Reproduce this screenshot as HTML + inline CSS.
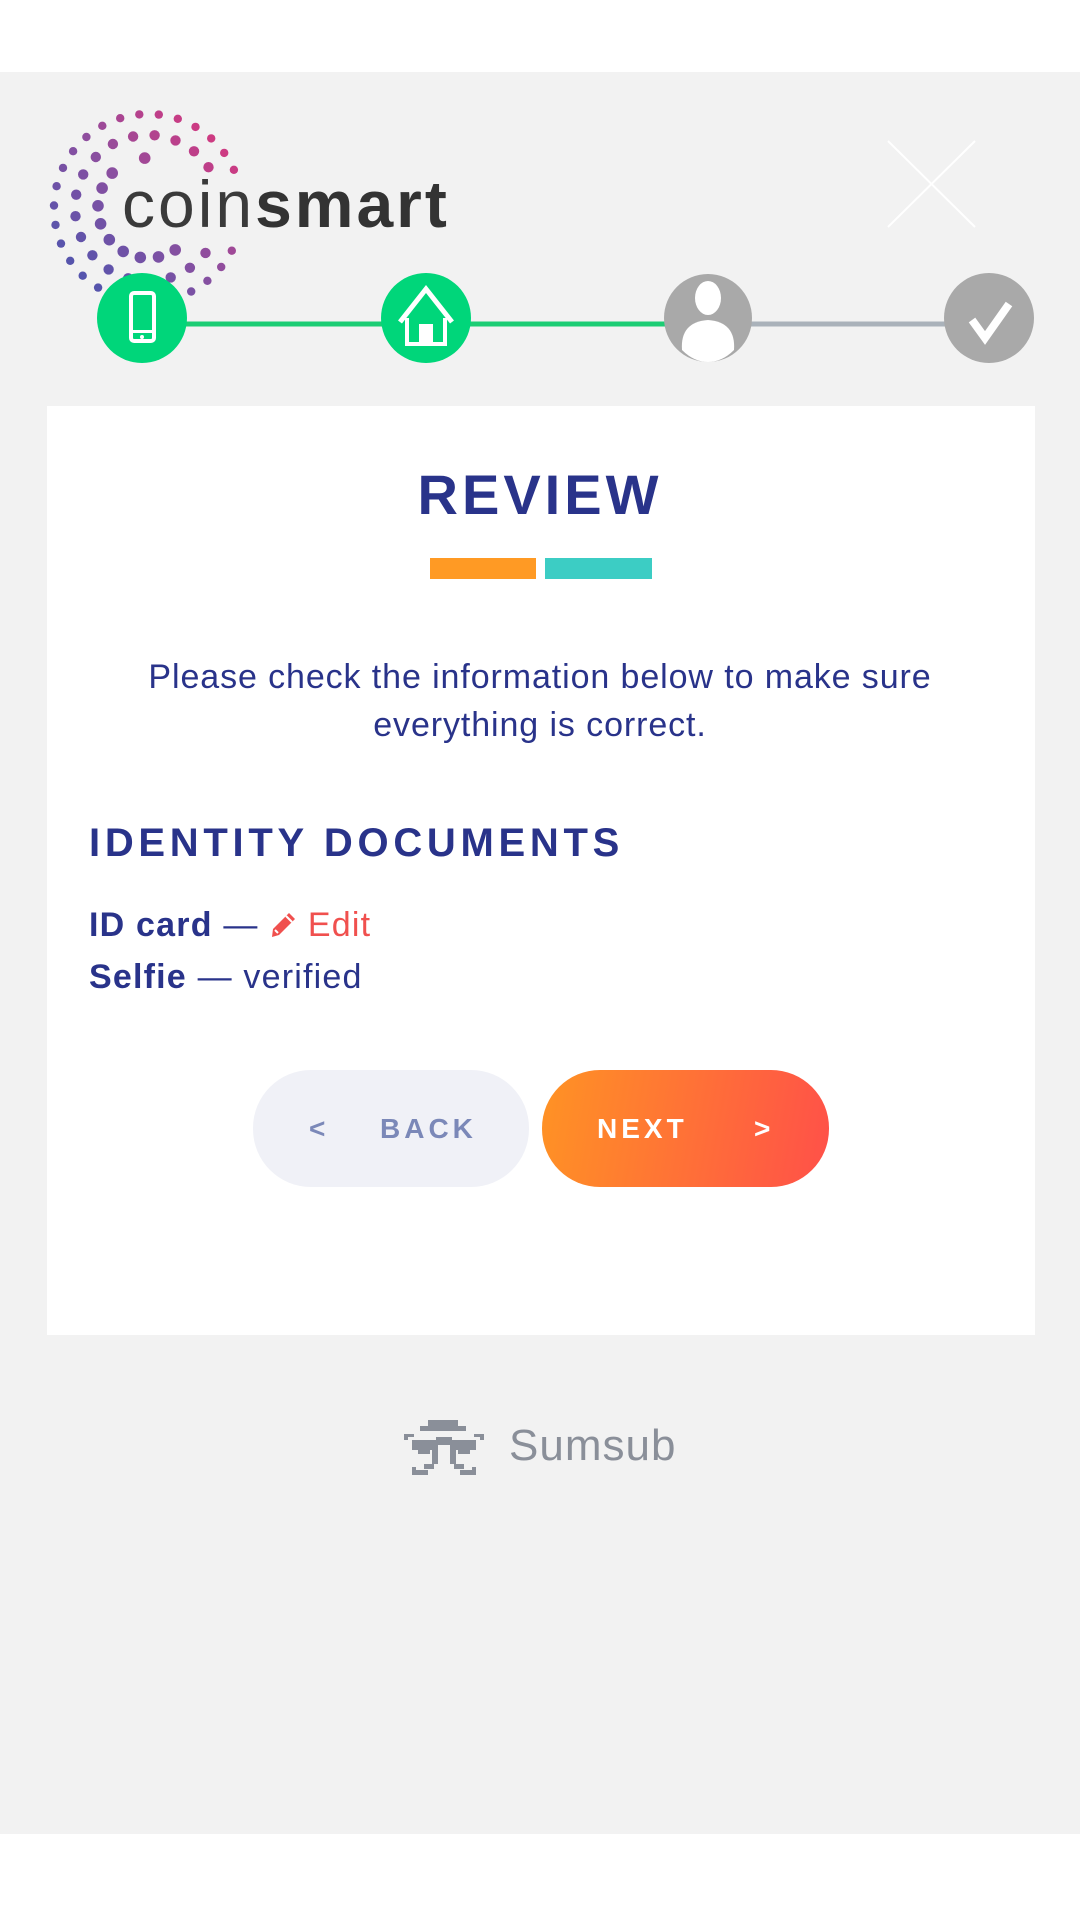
<!DOCTYPE html>
<html><head><meta charset="utf-8"><style>
*{margin:0;padding:0;box-sizing:border-box}
body{width:1080px;height:1908px;background:#fff;font-family:"Liberation Sans",sans-serif;position:relative;overflow:hidden}
.bg{position:absolute;left:0;top:72px;width:1080px;height:1762px;background:#f2f2f2}
.abs{position:absolute}
.card{position:absolute;left:47px;top:406px;width:988px;height:929px;background:#fff}
.navy{color:#29338a}
</style></head><body>
<div class="bg"></div>
<svg class="abs" style="left:0;top:72px" width="1080" height="330" id="top">
<g id="dots"></g>
<text x="122" y="155" font-family="Liberation Sans" font-size="66" fill="#333" letter-spacing="3"><tspan fill="#3a3a3a">coin</tspan><tspan font-weight="bold">smart</tspan></text>
<g stroke="#fff" stroke-width="2"><line x1="888" y1="69" x2="975" y2="155"/><line x1="975" y1="69" x2="888" y2="155"/></g>
<line x1="142" y1="252" x2="708" y2="252" stroke="#1ccd74" stroke-width="5"/>
<line x1="708" y1="252" x2="989" y2="252" stroke="#aab2ba" stroke-width="5"/>
<circle cx="142" cy="246" r="45" fill="#00d67a"/>
<circle cx="426" cy="246" r="45" fill="#00d67a"/>
<circle cx="708" cy="246" r="44" fill="#a9a9a9"/>
<circle cx="989" cy="246" r="45" fill="#a9a9a9"/>
<rect x="131" y="221" width="23" height="48" rx="3" fill="none" stroke="#fff" stroke-width="4"/>
<rect x="133" y="258" width="19" height="3" fill="#fff"/>
<circle cx="142" cy="265" r="2" fill="#fff"/>
<path d="M400 250 L426 217 L452 250" fill="none" stroke="#fff" stroke-width="5"/>
<path d="M407 246 V272 H445 V246" fill="none" stroke="#fff" stroke-width="4"/>
<rect x="419" y="252" width="14" height="20" fill="#fff"/>
<ellipse cx="708" cy="226" rx="13" ry="17" fill="#fff"/>
<path d="M682 278 Q680 250 708 248 Q736 250 734 278 Q722 290 708 290 Q694 290 682 278Z" fill="#fff"/>
<path d="M972 248 L985 266 L1009 232" fill="none" stroke="#fff" stroke-width="8"/>
</svg>
<div class="card"></div>
<div class="abs navy" style="left:0;width:1080px;top:462px;text-align:center;font-weight:bold;font-size:56px;letter-spacing:4px">REVIEW</div>
<div class="abs" style="left:430px;top:558px;width:106px;height:21px;background:#ff9a24"></div>
<div class="abs" style="left:545px;top:558px;width:107px;height:21px;background:#3ccdc4"></div>
<div class="abs navy" style="left:60px;width:960px;top:653px;text-align:center;font-size:34px;letter-spacing:0.9px;line-height:48px">Please check the information below to make sure<br>everything is correct.</div>
<div class="abs navy" style="left:89px;top:821px;font-weight:bold;font-size:40px;letter-spacing:4.7px">IDENTITY DOCUMENTS</div>
<div class="abs navy" style="left:89px;top:905px;font-size:34px;letter-spacing:1.2px;line-height:40px"><b>ID card</b> — <svg width="28" height="28" viewBox="0 0 28 28" style="vertical-align:-3px"><path d="M20 2 L26 8 L10 24 L3 26 L4 18 Z" fill="#f0504e"/><path d="M17 5 L23 11" stroke="#fff" stroke-width="2"/><path d="M6 19 L9 22" stroke="#fff" stroke-width="2"/></svg> <span style="color:#f0504e">Edit</span></div>
<div class="abs navy" style="left:89px;top:957px;font-size:34px;letter-spacing:1.2px;line-height:40px"><b>Selfie</b> — verified</div>
<div class="abs" style="left:253px;top:1070px;width:276px;height:117px;border-radius:58px;background:#f0f1f7;color:#7b88b8;font-weight:bold;font-size:28px;letter-spacing:4px;line-height:117px"><span style="position:absolute;left:56px">&lt;</span><span style="position:absolute;left:127px">BACK</span></div>
<div class="abs" style="left:542px;top:1070px;width:287px;height:117px;border-radius:58px;background:linear-gradient(100deg,#ff9324,#ff5049);color:#fff;font-weight:bold;font-size:28px;letter-spacing:4px;line-height:117px"><span style="position:absolute;left:55px">NEXT</span><span style="position:absolute;left:212px">&gt;</span></div>
<svg class="abs" style="left:404px;top:1420px" width="80" height="60" viewBox="0 0 80 60" fill="#8a8f99">
<rect x="24" y="0" width="30" height="6"/><rect x="16" y="6" width="46" height="5"/>
<rect x="0" y="14" width="4" height="6"/><rect x="0" y="14" width="10" height="3"/><rect x="76" y="14" width="4" height="6"/><rect x="70" y="14" width="10" height="3"/>
<rect x="8" y="20" width="26" height="10"/><rect x="46" y="20" width="26" height="10"/><rect x="32" y="17" width="16" height="8"/>
<rect x="14" y="30" width="12" height="4"/><rect x="54" y="30" width="12" height="4"/>
<rect x="28" y="30" width="6" height="14"/><rect x="46" y="30" width="6" height="14"/>
<rect x="20" y="44" width="10" height="5"/><rect x="50" y="44" width="10" height="5"/>
<rect x="8" y="50" width="16" height="5"/><rect x="56" y="50" width="16" height="5"/><rect x="8" y="47" width="4" height="6"/><rect x="68" y="47" width="4" height="6"/>
</svg>
<div class="abs" style="left:509px;top:1421px;font-size:44px;color:#8a8f99;letter-spacing:1px">Sumsub</div>
<script>
var g=document.getElementById('dots'),cx=148,cy=136,s='';
var rings=[[94,12,66,117,4.2],[73,17,56,128,5.2],[50,21,38,147,5.8]];
function col(x,y){var t=((x-cx)-(y-cy))/(2*94*0.9);t=Math.max(-1,Math.min(1,t));t=(1-t)/2;
var a=[224,53,122],b=[138,79,160],c=[70,86,176],r;
if(t<0.5){var u=t*2;r=a.map((v,i)=>v+(b[i]-v)*u)}else{var u=(t-0.5)*2;r=b.map((v,i)=>v+(c[i]-v)*u)}
return 'rgb('+r.map(Math.round).join(',')+')'}
rings.forEach(function(R){var r=R[0],st=R[1],a0=R[3],a1=R[2]+360,rd=R[4];
for(var a=a0;a<=a1+0.1;a+=(a1-a0)/Math.round((a1-a0)/st)){var th=a*Math.PI/180,x=cx+r*Math.sin(th),y=cy-r*Math.cos(th);
if(x>118&&y>88&&y<170&&x<240&&r<60)continue;
s+='<circle cx="'+x.toFixed(1)+'" cy="'+y.toFixed(1)+'" r="'+rd+'" fill="'+col(x,y)+'"/>'}});
g.innerHTML=s;
</script>
</body></html>
